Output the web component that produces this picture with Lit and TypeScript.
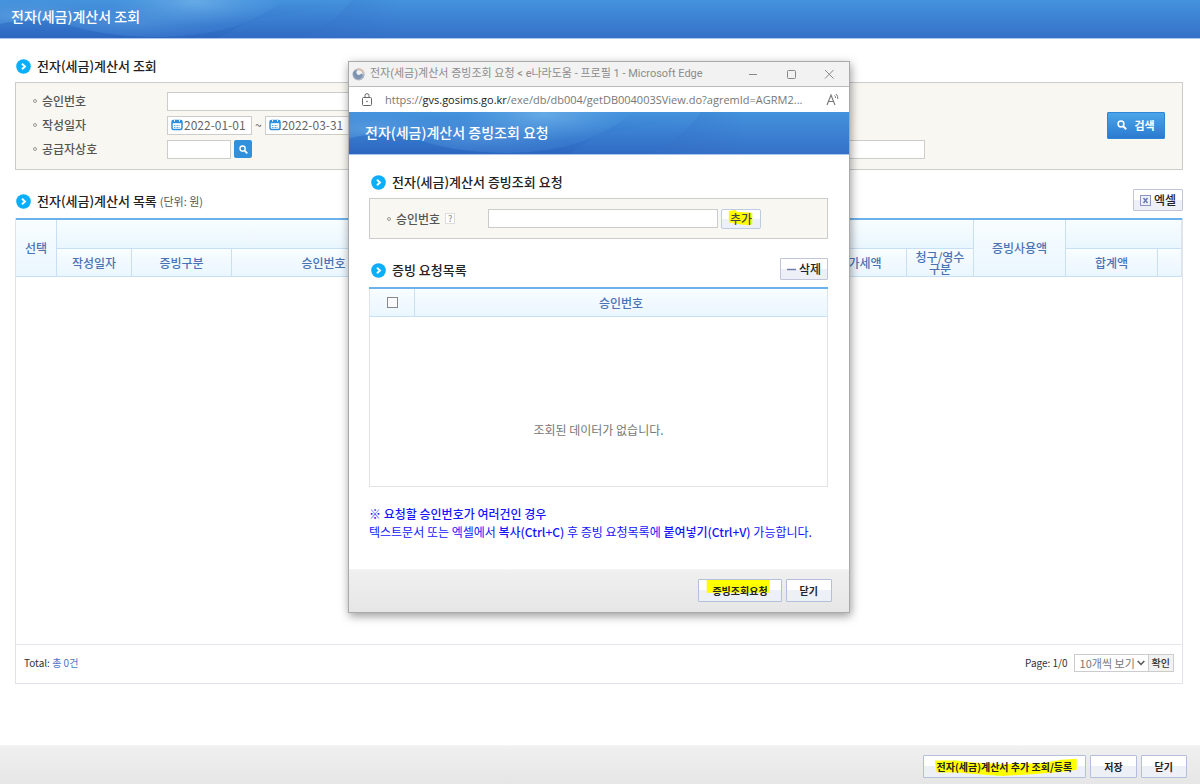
import { LitElement, html, css } from "lit";
import { customElement } from "lit/decorators.js";

const sheet = css`
  *, *::before { box-sizing: border-box; }
  :host { font-family: "Noto Sans CJK KR", sans-serif; font-size: 12px; line-height: 18px; color: #555; }
  button, input, select { font: inherit; margin: 0; }
  svg { display: block; flex: none; }

  .banner { position: relative; overflow: hidden; display: flex; align-items: center; background: linear-gradient(#4492dd, #3571c8); color: #fff; border-bottom: 1px solid #a9c6ec; }
  .banner svg { position: absolute; left: 0; top: 0; height: 100%; width: 400px; }
  .banner h1 { position: relative; margin: 0; font-size: 14px; line-height: 20px; font-weight: 500; }

  .heading { display: flex; align-items: center; gap: 6px; }
  .heading h2 { margin: 0; font-size: 13px; line-height: 20px; font-weight: 500; color: #222; }
  .heading .unit { font-size: 11px; font-weight: 400; color: #555; }
  .heading .end { margin: -2px 0 0 auto; }
  .list { margin-top: 19px; padding-top: 2px; }

  .box { border: 1px solid #ccc; background: #f8f7f2; }
  .label { display: flex; align-items: center; gap: 5px; font-weight: 500; color: #555; }
  .label::before { content: ""; width: 4px; height: 4px; border: 1px solid #999; border-radius: 50%; }
  .text { height: 19px; border: 1px solid #ccc; background: #fff; padding: 0 4px; color: #555; min-width: 0; outline: none; border-radius: 0; }

  .btn { position: relative; display: inline-flex; align-items: center; justify-content: center; gap: 3px; height: 23px; padding: 0 13px; border: 1px solid #b4bfdb; border-radius: 1px; background: linear-gradient(#fff 50%, #edf0f7 50%); color: #222; font-size: 10px; line-height: 18px; font-weight: 700; white-space: nowrap; }
  .btn.tool { height: 22px; font-size: 12px; padding: 0 6px; border-color: #c0c5da; font-weight: 500; }
  .btn.small { height: 20px; padding: 0 8px; font-size: 12px; border-color: #bccce2; border-radius: 2px; color: #444; font-weight: 500; }
  .btn span { position: relative; }
  .btn .mark { position: absolute; left: 0; top: 0; width: 100%; height: 100%; }

  .foot { display: flex; justify-content: flex-end; gap: 4px; border-top: 1px solid #f5f5f5; background: linear-gradient(#f0f0f0, #e6e6e6); }

  table { width: 100%; border-collapse: separate; border-spacing: 0; table-layout: fixed; border-top: 2px solid #6cb1ea; }
  th { padding: 0; font-weight: 500; font-size: 12px; line-height: 12px; color: #4a72b5; background: linear-gradient(#f8fdff, #eaf6fe); border-right: 1px solid #c9dff5; border-bottom: 1px solid #c9dff5; }
  th:last-child { border-right-color: #dfe5ee; }
`;

const arrow = html`<svg width="15" height="15" viewBox="0 0 15 15"><circle cx="7.5" cy="7.5" r="7.3" fill="#0aaefa"/><path d="M6 4.7 9 7.5 6 10.3" fill="none" stroke="#fff" stroke-width="1.9"/></svg>`;

const lens = (size: number) => html`<svg width=${size} height=${size} viewBox="0 0 10 10"><circle cx="4" cy="4" r="2.9" fill="none" stroke="#fff" stroke-width="1.5"/><path d="M6.2 6.2 9.2 9.2" stroke="#fff" stroke-width="2"/></svg>`;

const calendar = html`<svg width="12" height="12" viewBox="0 0 12 12"><rect x="1" y="1.500" width="10" height="9" rx="1.500" fill="#fff" stroke="#2f8fdc" stroke-width="1.500"/><path d="M1 2.700H11" stroke="#2f8fdc" stroke-width="3"/><path d="M3.500 1V2.500M8.500 1V2.500" stroke="#fff"/><path d="M3 6.500H9M3 8.500H9" stroke="#5aa7e4" stroke-dasharray="1 .5"/></svg>`;

const swirl = html`<svg viewBox="0 0 400 38" preserveAspectRatio="none">
  <defs>
    <linearGradient id="deep" x1="0" x2="0" y1="0" y2="1"><stop offset="0" stop-color="#4492dd"/><stop offset="1" stop-color="#2c66c0"/></linearGradient>
    <linearGradient id="mid" x1="0" x2="0" y1="0" y2="1"><stop offset="0" stop-color="#4593dd"/><stop offset="1" stop-color="#3470c8"/></linearGradient>
    <radialGradient id="glow"><stop offset="0" stop-color="#6fb0e8" stop-opacity=".8"/><stop offset="1" stop-color="#5ba2e2" stop-opacity="0"/></radialGradient>
    <linearGradient id="end" x1="0" x2="1" y1="0" y2="0"><stop offset="0" stop-color="#2c66c0" stop-opacity=".35"/><stop offset="1" stop-color="#2c66c0" stop-opacity="0"/></linearGradient>
    <clipPath id="bowl"><path d="M0 0H284Q240 36 160 37Q100 37 60 22Q20 18 0 24Z"/></clipPath>
  </defs>
  <path d="M0 0H352Q332 26 300 38H0Z" fill="url(#deep)"/>
  <path d="M250 20Q300 14 352 0Q332 26 300 38H220Z" fill="url(#mid)" opacity=".5"/>
  <path d="M352 0H400V38H300Q332 26 352 0Z" fill="url(#end)"/>
  <g clip-path="url(#bowl)">
    <rect width="290" height="38" fill="url(#mid)"/>
    <ellipse cx="195" cy="2" rx="85" ry="24" fill="url(#glow)"/>
    <ellipse cx="20" cy="16" rx="80" ry="16" fill="url(#glow)" opacity=".6"/>
    <ellipse cx="130" cy="22" rx="90" ry="18" fill="url(#glow)" opacity=".4"/>
  </g>
</svg>`;

@customElement("popup-window")
class PopupWindow extends LitElement {
  static styles = [sheet, css`
    :host { display: block; background: #fff; border: 1px solid #aaa; box-shadow: 1px 3px 9px rgba(0, 0, 0, .4); }
    .title { display: flex; align-items: center; height: 25px; padding: 0 11px 0 3px; gap: 5px; background: #f2f2f2; border-bottom: 1px solid #bbb; color: #8c8c8c; font-family: Roboto, "Noto Sans CJK KR", sans-serif; font-size: 11px; white-space: nowrap; }
    .title .controls { margin-left: auto; display: flex; gap: 20px; }
    .title button { border: 0; padding: 2px; background: none; }
    .address { display: flex; align-items: center; height: 25px; padding: 0 9px 0 12px; font-family: "Open Sans", sans-serif; font-size: 11px; color: #777; white-space: nowrap; }
    .address b { font-weight: 400; color: #222; }
    .address .url { margin-left: 12px; }
    .address .read { margin-left: auto; }
    .banner { height: 43px; padding: 0 0 2px 16px; }
    .content { padding: 17px 21px 0 20px; }
    .heading { padding-left: 2px; }
    .list { padding-top: 2px; }
    .box { display: flex; align-items: center; height: 41px; margin-top: 6px; padding-left: 17px; }
    .box .label { width: 101px; }
    .box .text { width: 230px; margin-right: 3px; }
    .help { display: inline-block; width: 10px; height: 11px; border: 1px solid #ddd; background: #fff; font-size: 9px; line-height: 9px; text-align: center; color: #999; }
    table { margin-top: 7px; }
    th { height: 28px; }
    th:first-child { border-left: 1px solid #dfe5ee; }
    .pick { width: 46px; }
    .pick input { display: block; width: 11px; height: 11px; margin: 0 auto; appearance: none; border: 1px solid #888; background: #fafafa; }
    td { height: 170px; padding: 57px 0 0; text-align: center; border: 1px solid #e2e2e2; border-top: 0; color: #777; }
    .notes { margin: 18px 0 0; padding-bottom: 28px; color: #1414ff; white-space: nowrap; }
    .notes b { font-weight: 500; }
    .foot { height: 43px; padding: 9px 17px 0 0; }
  `];

  render() {
    return html`
      <div class="title">
        <svg width="13" height="13" viewBox="0 0 13 13"><circle cx="6.5" cy="6.5" r="5.200" fill="none" stroke="#a9b6c8" stroke-width="1.800"/><path d="M5 1.300Q10 .5 11.800 5" fill="none" stroke="#dcbfa8" stroke-width="1.800"/><path d="M1 5Q2 1.500 5.500 2.500Q3.500 4 5 6Q7 8 9.500 5.500Q12 6.500 10 9.500Q7 12.500 3.500 10.500Q1 8.500 1 5Z" fill="#7d93b0"/></svg>
        <span>전자(세금)계산서 증빙조회 요청 &lt; e나라도움 - 프로필 1 - Microsoft Edge</span>
        <div class="controls">
          <button><svg width="14" height="14" viewBox="0 0 14 14"><path d="M3 7.5H11" stroke="#888"/></svg></button>
          <button><svg width="14" height="14" viewBox="0 0 14 14"><rect x="3.5" y="3.5" width="8" height="8" rx="1" fill="none" stroke="#888"/></svg></button>
          <button><svg width="14" height="14" viewBox="0 0 14 14"><path d="M3 3 11.5 11.5M11.5 3 3 11.5" stroke="#888"/></svg></button>
        </div>
      </div>
      <div class="address">
        <svg width="12" height="13" viewBox="0 0 12 13"><rect x="1.5" y="4.5" width="9" height="8" rx="1" fill="none" stroke="#666"/><path d="M4 4.5V2.5Q4 .7 6 .7Q8 .7 8 2.5V4.5" fill="none" stroke="#666"/><circle cx="6" cy="8.5" r=".8" fill="#666"/></svg>
        <span class="url">https://<b>gvs.gosims.go.kr</b>/exe/db/db004/getDB004003SView.do?agremId=AGRM2...</span>
        <svg class="read" width="14" height="13" viewBox="0 0 14 13"><path d="M1 12 5 2 9 12M2.5 8.5H7.5" fill="none" stroke="#777" stroke-width="1.1"/><path d="M8.5 2.5Q9.8 3.5 9.5 5M10 1Q12.3 3 11.8 6" fill="none" stroke="#777"/></svg>
      </div>
      <div class="banner">${swirl}<h1>전자(세금)계산서 증빙조회 요청</h1></div>
      <div class="content">
        <div class="heading">${arrow}<h2>전자(세금)계산서 증빙조회 요청</h2></div>
        <div class="box">
          <label class="label" for="no">승인번호<span class="help">?</span></label>
          <input class="text" id="no" type="text" />
          <button class="btn small"><svg class="mark" viewBox="0 0 39 20" preserveAspectRatio="none"><path d="M7 1 14 0 15 2 31 3V16L27 17 20 16 7 14Z" fill="#ff0"/></svg><span>추가</span></button>
        </div>
        <div class="heading list">${arrow}<h2>증빙 요청목록</h2>
          <button class="btn tool end"><svg width="9" height="10" viewBox="0 0 9 10"><path d="M0 5.5H9" stroke="#7280ae" stroke-width="1.5"/></svg><span>삭제</span></button>
        </div>
        <table>
          <tr><th class="pick"><input type="checkbox" aria-labelledby="col" /></th><th id="col">승인번호</th></tr>
          <tr><td colspan="2">조회된 데이터가 없습니다.</td></tr>
        </table>
        <p class="notes"><b>※ 요청할 승인번호가 여러건인 경우</b><br />텍스트문서 또는 엑셀에서 <b>복사(Ctrl+C)</b> 후 증빙 요청목록에 <b>붙여넣기(Ctrl+V)</b> 가능합니다.</p>
      </div>
      <div class="foot">
        <button class="btn"><svg class="mark" viewBox="0 0 84 23" preserveAspectRatio="none"><path d="M8 0H73V14H8Z" fill="#ff0"/></svg><span>증빙조회요청</span></button>
        <button class="btn"><span>닫기</span></button>
      </div>`;
  }
}

@customElement("app-root")
class AppRoot extends LitElement {
  static styles = [sheet, css`
    :host { display: flex; flex-direction: column; min-height: 100vh; background: #fff; position: relative; }
    .banner { height: 39px; padding: 0 0 6px 11px; }
    main { flex: 1; display: flex; flex-direction: column; padding: 17px 17px 61px 15px; }
    main > .heading { padding-left: 1px; }
    .box { display: flex; align-items: center; justify-content: space-between; margin-top: 6px; padding: 9px 17px 11px; height: 88px; }
    .fields { display: grid; grid-template-columns: 134px 1fr; row-gap: 5px; flex: 0 1 892px; }
    .row { display: flex; align-items: center; gap: 3px; height: 19px; }
    .w-no { width: 280px; }
    .w-name { width: 64px; }
    .w-full { width: 240px; margin-left: auto; }
    .date { display: flex; align-items: center; gap: 1px; width: 85px; height: 19px; padding-left: 3px; border: 1px solid #ccc; background: #fff; }
    .date input { width: 66px; border: 0; padding: 0; height: 17px; background: none; color: #666; outline: none; }
    .icon { display: grid; place-items: center; width: 18px; height: 18px; padding: 0; border: 0; border-radius: 2px; background: #3190dc; }
    .search { display: flex; align-items: center; justify-content: center; gap: 7px; width: 58px; height: 27px; padding: 0; border: 1px solid #2f86d6; border-radius: 1px; background: linear-gradient(#4ba5e8, #2b7ad0); color: #fff; font-size: 11px; font-weight: 700; }
    .grid { flex: 1; display: flex; flex-direction: column; margin-top: 7px; border: 1px solid #e0e3ea; border-top: 0; }
    th { height: 28px; }
    th.first { height: 29px; }
    .c1 { width: 41px; } .c2 { width: 75px; } .c3 { width: 100px; } .c4 { width: 184px; }
    .c6 { width: 94px; } .c7 { width: 67px; } .c8 { width: 92px; } .c9 { width: 92px; } .c10 { width: 24px; }
    .pager { display: flex; align-items: center; justify-content: space-between; height: 39px; margin-top: auto; padding: 0 8px 2px; border-top: 1px solid #e4e6ec; font-size: 10px; color: #333; }
    .pager em { font-style: normal; color: #4a78c4; }
    .pages { display: flex; align-items: center; }
    .choice { position: relative; margin-left: 6px; display: flex; align-items: center; }
    .choice svg { position: absolute; right: 4px; }
    .choice select { appearance: none; width: 75px; height: 18px; padding: 0 0 0 5px; border: 1px solid #ccc; border-radius: 0; background: #fff; color: #777; font-size: 11px; line-height: 16px; }
    .go { height: 18px; padding: 0 3px; border: 1px solid #ccc; border-left: 0; background: #f2f2f2; color: #333; line-height: 16px; font-weight: 500; }
    .foot { height: 39px; padding: 9px 13px 0 0; }
    popup-window { position: absolute; top: 61px; left: 0; right: 2px; width: 502px; margin: 0 auto; }
  `];

  render() {
    return html`
      <div class="banner">${swirl}<h1>전자(세금)계산서 조회</h1></div>
      <main>
        <div class="heading">${arrow}<h2>전자(세금)계산서 조회</h2></div>
        <form class="box" @submit=${(e: Event) => e.preventDefault()}>
          <div class="fields">
            <label class="label" for="no">승인번호</label>
            <div class="row"><input class="text w-no" id="no" type="text" /></div>
            <label class="label" id="day" for="from">작성일자</label>
            <div class="row">
              <span class="date">${calendar}<input id="from" type="text" value="2022-01-01" /></span>~
              <span class="date">${calendar}<input type="text" value="2022-03-31" aria-labelledby="day" /></span>
            </div>
            <label class="label" id="who" for="name">공급자상호</label>
            <div class="row">
              <input class="text w-name" id="name" type="text" />
              <button class="icon" type="button" aria-labelledby="who">${lens(9)}</button>
              <input class="text w-full" type="text" aria-labelledby="who" />
            </div>
          </div>
          <button class="search">${lens(10)}<span>검색</span></button>
        </form>
        <div class="heading list">${arrow}<h2>전자(세금)계산서 목록 <span class="unit">(단위: 원)</span></h2>
          <button class="btn tool end"><svg width="11" height="11" viewBox="0 0 11 11"><rect x=".5" y=".5" width="10" height="10" fill="#eef1fa" stroke="#8a97c4"/><path d="M3.5 3 7.5 8M7.5 3 3.5 8" stroke="#6c7cb0" stroke-width="1.5"/></svg><span>엑셀</span></button>
        </div>
        <div class="grid">
          <table>
            <colgroup><col class="c1" /><col class="c2" /><col class="c3" /><col class="c4" /><col /><col class="c6" /><col class="c7" /><col class="c8" /><col class="c9" /><col class="c10" /></colgroup>
            <tr><th rowspan="2">선택</th><th class="first" colspan="6"></th><th rowspan="2">증빙사용액</th><th colspan="2"></th></tr>
            <tr><th>작성일자</th><th>증빙구분</th><th>승인번호</th><th></th><th>부가세액</th><th>청구/영수<br />구분</th><th>합계액</th><th></th></tr>
          </table>
          <div class="pager">
            <span>Total: <em>총 0건</em></span>
            <div class="pages">
              <label for="size">Page: 1/0</label>
              <span class="choice"><select id="size"><option>10개씩 보기</option></select><svg width="8" height="6" viewBox="0 0 8 6"><path d="M.7 1 4 4.5 7.3 1" fill="none" stroke="#555" stroke-width="1.5"/></svg></span>
              <button class="go">확인</button>
            </div>
          </div>
        </div>
      </main>
      <div class="foot">
        <button class="btn"><svg class="mark" viewBox="0 0 165 23" preserveAspectRatio="none"><path d="M11 5H33L50 7 80 9 120 8 140 4 156 3V15L145 17 110 20 80 22 55 20 35 18 13 18Z" fill="#ff0"/></svg><span>전자(세금)계산서 추가 조회/등록</span></button>
        <button class="btn"><span>저장</span></button>
        <button class="btn"><span>닫기</span></button>
      </div>
      <popup-window></popup-window>`;
  }
}
